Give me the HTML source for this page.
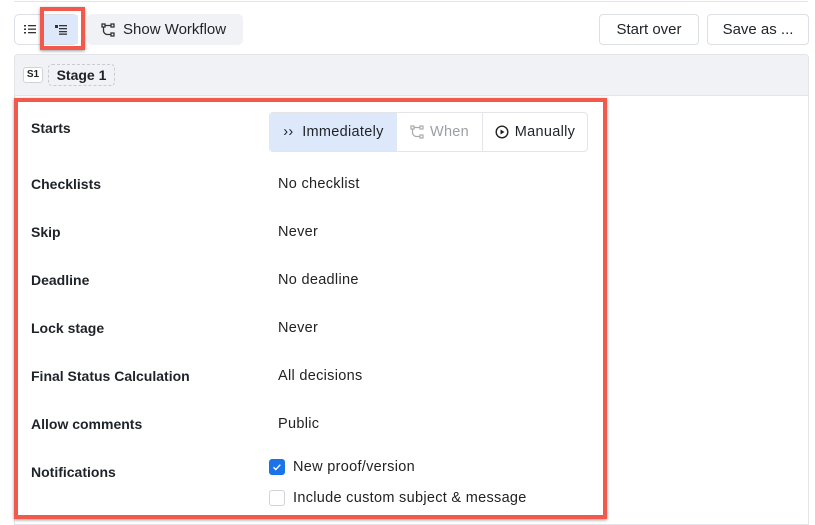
<!DOCTYPE html>
<html><head><style>
*{box-sizing:border-box;margin:0;padding:0}
body{width:815px;height:520px;background:#fff;font-family:"Liberation Sans",sans-serif;color:#1f2328;position:relative;overflow:hidden;font-size:14px}
.abs{position:absolute}
.btn{position:absolute;border:1px solid #dcdfe4;border-radius:4px;background:#fff;font-size:15px;display:flex;align-items:center;justify-content:center}
.lbl{position:absolute;left:31px;font-weight:bold;font-size:14px}
.val{position:absolute;left:278px;font-size:14.5px;letter-spacing:.3px;color:#222}
</style></head><body>
<div class="abs" style="left:14px;top:1px;width:794px;height:1px;background:#e3e5e8"></div>
<div class="btn" style="left:14px;top:14px;width:64px;height:31px;border-radius:5px"></div>
<svg class="abs" style="left:24px;top:24px" width="13" height="11"><g fill="#333"><rect x="0" y="1" width="2" height="1.5"/><rect x="0" y="4.5" width="2" height="1.5"/><rect x="0" y="8" width="2" height="1.5"/><rect x="4" y="1" width="8" height="1.3"/><rect x="4" y="4.5" width="8" height="1.3"/><rect x="4" y="8" width="8" height="1.3"/></g></svg>
<div class="abs" style="left:44px;top:15px;width:34px;height:29px;background:#dde9fa"></div>
<svg class="abs" style="left:55px;top:24px" width="14" height="11"><g fill="#333"><rect x="0" y="1" width="3" height="3"/><rect x="4" y="1" width="8" height="1.3"/><rect x="4" y="4" width="8" height="1.3"/><rect x="4" y="7" width="8" height="1.3"/><rect x="4" y="9.5" width="8" height="1.3"/></g></svg>
<div class="abs" style="left:40px;top:7px;width:45px;height:43px;border:4px solid #f0594c;box-shadow:0 1px 3px rgba(0,0,0,.4)"></div>
<div class="abs" style="left:87px;top:14px;width:156px;height:31px;background:#f1f2f5;border-radius:5px"></div>
<svg class="abs" style="left:101px;top:23px" width="14" height="14" fill="none" stroke="#333" stroke-width="1.3"><rect x="1" y="1" width="3" height="3"/><rect x="10" y="1" width="3" height="3"/><rect x="10" y="10" width="3" height="3"/><path d="M4 2.5h6M2.5 4v3a4 4 0 0 0 4 4.5h3.5"/></svg>
<div class="abs" style="left:123px;top:21px;font-size:15px">Show Workflow</div>
<div class="btn" style="left:599px;top:14px;width:100px;height:31px">Start over</div>
<div class="btn" style="left:707px;top:14px;width:102px;height:31px">Save as ...</div>
<div class="abs" style="left:14px;top:54px;width:795px;height:42px;background:#f1f2f5;border:1px solid #e3e5e8;border-radius:4px 4px 0 0"></div>
<div class="abs" style="left:14px;top:95px;width:795px;height:430px;border:1px solid #e3e5e8;border-top:none"></div>
<div class="abs" style="left:23px;top:67px;width:20px;height:16px;border:1px solid #d0d3d8;border-radius:3px;background:#fff;font-size:10px;font-weight:bold;text-align:center;line-height:14px">S1</div>
<div class="abs" style="left:48px;top:64px;width:67px;height:22px;border:1px dashed #c8ccd2;border-radius:4px;font-weight:bold;font-size:14px;text-align:center;line-height:20px">Stage 1</div>
<div class="abs" style="left:14px;top:98px;width:593px;height:421px;border:4px solid #f0594c;box-shadow:0 1px 3px rgba(0,0,0,.4)"></div>
<div class="lbl" style="top:120px">Starts</div>
<div class="abs" style="left:269px;top:112px;width:319px;height:40px;border:1px solid #e3e5e8;border-radius:4px;overflow:hidden;display:flex;font-size:14.5px;letter-spacing:.3px">
<div style="width:127px;background:#dde9fa;display:flex;align-items:center;justify-content:center">›› &nbsp;Immediately</div>
<div style="width:86px;border-right:1px solid #e3e5e8;display:flex;align-items:center;justify-content:center;color:#9aa0a6"><svg width="14" height="14" fill="none" stroke="#aaa" stroke-width="1.2" style="margin-right:6px"><rect x="1" y="1" width="3" height="3"/><rect x="10" y="1" width="3" height="3"/><rect x="10" y="10" width="3" height="3"/><path d="M4 2.5h6M2.5 4v3a4 4 0 0 0 4 4.5h3.5"/></svg>When</div>
<div style="flex:1;display:flex;align-items:center;justify-content:center"><svg width="14" height="14" style="margin-right:6px"><circle cx="7" cy="7" r="5.8" fill="none" stroke="#222" stroke-width="1.4"/><path d="M5.5 4.5v5l4-2.5z" fill="#222"/></svg>Manually</div>
</div>
<div class="lbl" style="top:176px">Checklists</div><div class="val" style="top:176px">No checklist</div>
<div class="lbl" style="top:224px">Skip</div><div class="val" style="top:224px">Never</div>
<div class="lbl" style="top:272px">Deadline</div><div class="val" style="top:272px">No deadline</div>
<div class="lbl" style="top:320px">Lock stage</div><div class="val" style="top:320px">Never</div>
<div class="lbl" style="top:368px">Final Status Calculation</div><div class="val" style="top:368px">All decisions</div>
<div class="lbl" style="top:416px">Allow comments</div><div class="val" style="top:416px">Public</div>
<div class="lbl" style="top:464px">Notifications</div>
<div class="abs" style="left:269px;top:459px;width:16px;height:16px;background:#1a73e8;border-radius:3px"><svg width="16" height="16"><path d="M4.5 8.2l2.3 2.3 4.5-4.8" fill="none" stroke="#fff" stroke-width="1.4"/></svg></div>
<div class="val" style="left:293px;top:459px">New proof/version</div>
<div class="abs" style="left:269px;top:490px;width:16px;height:16px;border:1px solid #d0d3d8;border-radius:3px"></div>
<div class="val" style="left:293px;top:490px">Include custom subject &amp; message</div>
</body></html>
